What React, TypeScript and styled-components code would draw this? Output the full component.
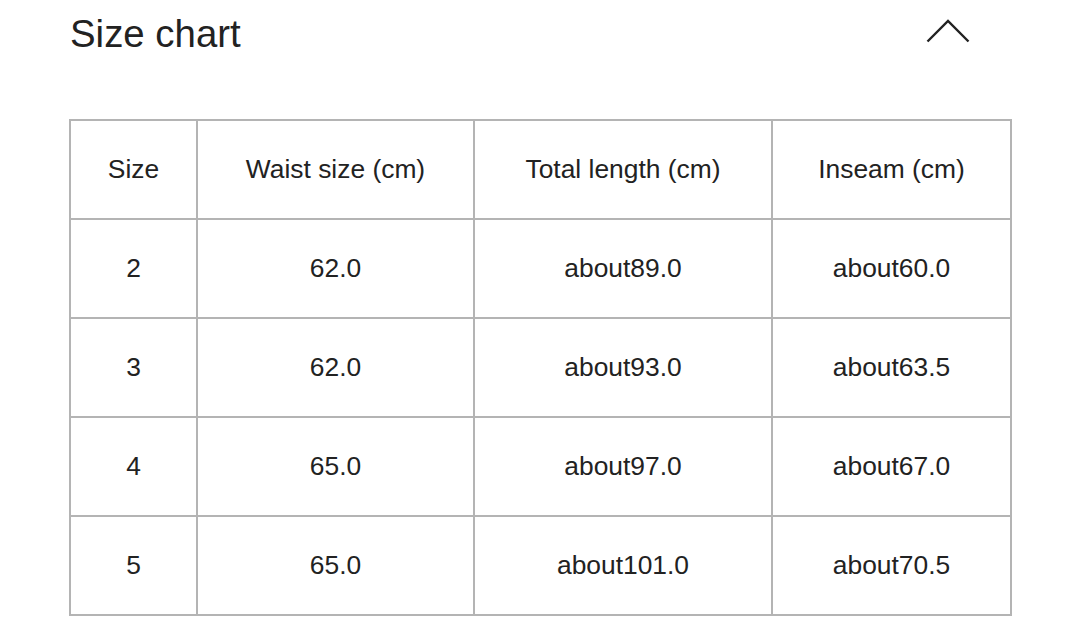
import React from 'react';
import styled, { createGlobalStyle } from 'styled-components';

const GlobalStyle = createGlobalStyle`
  html, body {
    margin: 0;
    padding: 0;
    background: #fff;
  }
  body {
    font-family: "Liberation Sans", Arial, sans-serif;
    color: #222;
  }
`;

const Page = styled.div`
  width: 1080px;
  padding: 15px 0 0 69px;
  box-sizing: border-box;
`;

const Header = styled.div`
  display: flex;
  align-items: flex-start;
  justify-content: space-between;
  width: 944px;
`;

const Title = styled.h2`
  margin: 0;
  font-size: 38.4px;
  line-height: 38px;
  font-weight: 400;
  color: #222;
  padding-left: 1px;
`;

const Toggle = styled.button`
  border: 0;
  background: none;
  padding: 0;
  margin: 4px 42px 0 0;
  width: 46px;
  height: 26px;
  cursor: pointer;
  display: flex;
`;

const Table = styled.table`
  margin-top: 66px;
  border-collapse: collapse;
  width: 941px;
  table-layout: fixed;
`;

const Col = styled.col<{ $w: number }>`
  width: ${(p) => p.$w}px;
`;

const Cell = styled.td`
  border: 2px solid #b4b4b4;
  height: 99px;
  box-sizing: border-box;
  padding: 0;
  text-align: center;
  vertical-align: middle;
  font-size: 26.4px;
  color: #222;
`;

const HeadCell = styled(Cell).attrs({ as: 'th' })`
  font-weight: 400;
`;

const columns = [
  { label: 'Size', w: 127 },
  { label: 'Waist size (cm)', w: 277 },
  { label: 'Total length (cm)', w: 298 },
  { label: 'Inseam (cm)', w: 239 },
];

const rows = [
  ['2', '62.0', 'about89.0', 'about60.0'],
  ['3', '62.0', 'about93.0', 'about63.5'],
  ['4', '65.0', 'about97.0', 'about67.0'],
  ['5', '65.0', 'about101.0', 'about70.5'],
];

const Chevron = () => (
  <svg width="46" height="26" viewBox="0 0 46 26" fill="none">
    <path d="M2.5 22.5 L23 2 L43.5 22.5" stroke="#222" strokeWidth="2.4" strokeLinecap="butt" />
  </svg>
);

const App = () => (
  <>
    <GlobalStyle />
    <Page>
      <Header>
        <Title>Size chart</Title>
        <Toggle aria-label="Collapse">
          <Chevron />
        </Toggle>
      </Header>
      <Table>
        <colgroup>
          {columns.map((c) => (
            <Col key={c.label} $w={c.w} />
          ))}
        </colgroup>
        <thead>
          <tr>
            {columns.map((c) => (
              <HeadCell key={c.label}>{c.label}</HeadCell>
            ))}
          </tr>
        </thead>
        <tbody>
          {rows.map((r) => (
            <tr key={r[0]}>
              {r.map((v, i) => (
                <Cell key={i}>{v}</Cell>
              ))}
            </tr>
          ))}
        </tbody>
      </Table>
    </Page>
  </>
);

export default App;
